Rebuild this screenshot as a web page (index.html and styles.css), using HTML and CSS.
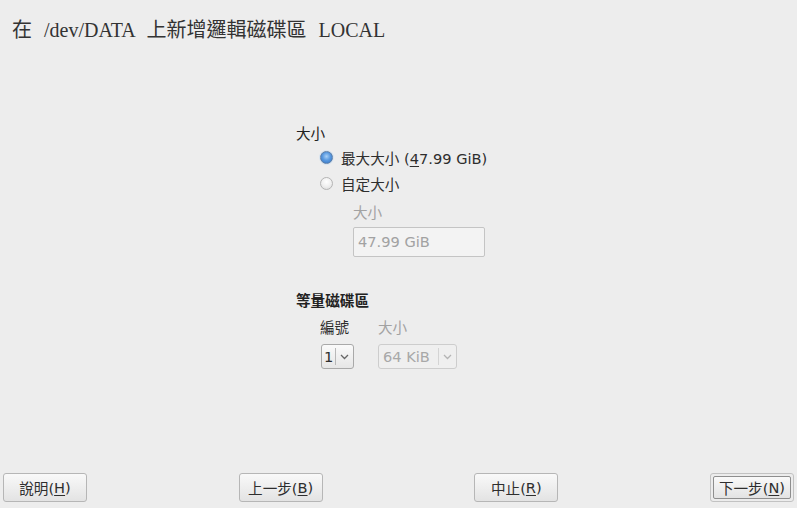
FILE: index.html
```html
<!DOCTYPE html>
<html>
<head>
<meta charset="utf-8">
<link rel="stylesheet" href="styles.css">
</head>
<body>
<div class="page">
  <h1 class="title">在 /dev/DATA 上新增邏輯磁碟區 LOCAL</h1>
  <div class="form">
    <div class="heading">大小</div>
    <label class="radio-row first">
      <span class="radio checked"></span>
      <span>最大大小 (<u>4</u>7.99 GiB)</span>
    </label>
    <label class="radio-row second">
      <span class="radio"></span>
      <span>自定大小</span>
    </label>
    <div class="sub-label disabled">大小</div>
    <div class="input disabled">47.99 GiB</div>

    <div class="heading bold">等量磁碟區</div>
    <div class="stripe">
      <div class="col col-num">
        <div class="col-label">編號</div>
        <div class="combo">
          <span class="combo-value">1</span>
          <span class="combo-sep"></span>
          <svg class="chev" width="9" height="6" viewBox="0 0 9 6"><path d="M1 1 L4.5 4.5 L8 1" fill="none" stroke="#666" stroke-width="1.3"/></svg>
        </div>
      </div>
      <div class="col col-size">
        <div class="col-label disabled">大小</div>
        <div class="combo combo-wide is-disabled">
          <span class="combo-value">64 KiB</span>
          <span class="combo-sep"></span>
          <svg class="chev" width="9" height="6" viewBox="0 0 9 6"><path d="M1 1 L4.5 4.5 L8 1" fill="none" stroke="#b4b4b4" stroke-width="1.3"/></svg>
        </div>
      </div>
    </div>
  </div>
  <div class="buttons">
    <button class="btn">說明(<u>H</u>)</button>
    <button class="btn">上一步(<u>B</u>)</button>
    <button class="btn">中止(<u>R</u>)</button>
    <button class="btn default"><span class="btn-inner">下一步(<u>N</u>)</span></button>
  </div>
</div>
</body>
</html>
```

FILE: styles.css
```css
html, body {
  margin: 0;
  padding: 0;
  background: #ededed;
}
.page {
  width: 797px;
  height: 508px;
  display: flex;
  flex-direction: column;
  font-family: "DejaVu Sans", "Noto Sans CJK TC", sans-serif;
  font-size: 14.6px;
  color: #2e2e2e;
}
.title {
  margin: 0;
  padding: 19px 0 0 12px;
  height: 22px;
  line-height: 22px;
  font-family: "Liberation Serif", "Noto Sans CJK TC", serif;
  font-weight: normal;
  font-size: 20px;
  word-spacing: 7px;
  color: #333;
}
.form {
  width: 205px;
  margin: 84px auto 0;
  display: flex;
  flex-direction: column;
  align-items: flex-start;
}
.heading {
  height: 18px;
  line-height: 18px;
  color: #222;
}
.heading.bold {
  font-weight: bold;
  margin-top: 35px;
}
.radio-row {
  display: flex;
  align-items: center;
  gap: 8px;
  height: 18px;
  line-height: 18px;
  margin-left: 24px;
}
.radio-row.first { margin-top: 7px; }
.radio-row.second { margin-top: 8px; }
.radio-row u { text-decoration-thickness: 1px; text-underline-offset: 2px; }
.radio {
  width: 11px;
  height: 11px;
  border-radius: 50%;
  border: 1px solid #b4b4b4;
  background: radial-gradient(circle at 50% 35%, #ffffff 0%, #f0f0f0 50%, #d8d8d8 100%);
  margin-top: -3px;
}
.radio.checked {
  border-color: #5d7fa8;
  background: radial-gradient(circle at 50% 40%, #a8d0f6 0%, #5a9ae0 45%, #2f6fc0 100%);
  box-shadow: 0 0 0 1px #d8e4f0;
}
.disabled { color: #a2a2a2; }
.sub-label {
  margin: 10px 0 0 57px;
  height: 18px;
  line-height: 18px;
}
.input {
  margin: 5px 0 0 57px;
  box-sizing: border-box;
  width: 132px;
  height: 30px;
  border: 1px solid #c4c4c4;
  border-radius: 2px;
  background: #f3f3f3;
  padding-left: 4px;
  line-height: 28px;
}
.stripe {
  display: flex;
  margin-left: 24px;
  margin-top: 9px;
  gap: 24px;
}
.col { display: flex; flex-direction: column; align-items: flex-start; }
.col-label {
  height: 18px;
  line-height: 18px;
}
.combo {
  margin-top: 7px;
  margin-left: 1px;
  box-sizing: border-box;
  width: 33px;
  height: 25px;
  border: 1px solid #a9a9a9;
  border-radius: 3px;
  background: linear-gradient(#fafafa, #e6e6e6);
  display: flex;
  align-items: center;
  padding-left: 2px;
}
.combo-wide {
  width: 79px;
  margin-left: 0;
  padding-left: 4px;
}
.combo-value { flex: 1; line-height: 23px; }
.combo-sep {
  width: 1px;
  height: 17px;
  background: #b8b8b8;
  margin-right: 4px;
}
.combo .chev { margin-right: 4px; }
.combo.is-disabled {
  border-color: #cdcdcd;
  background: #efefef;
  color: #a8a8a8;
}
.combo.is-disabled .combo-sep { background: #d4d4d4; }
.buttons {
  margin-top: auto;
  display: flex;
  justify-content: space-between;
  padding: 0 3px 6px;
}
.btn {
  box-sizing: border-box;
  width: 84px;
  height: 29px;
  border: 1px solid #b6b6b6;
  border-radius: 3px;
  background: linear-gradient(#f9f9f9, #e3e3e3);
  font-family: "DejaVu Sans", "Noto Sans CJK TC", sans-serif;
  font-size: 14.6px;
  color: #2e2e2e;
  padding: 0;
  display: flex;
  align-items: center;
  justify-content: center;
}
.btn u { text-decoration-thickness: 1px; text-underline-offset: 2px; }
.btn.default {
  border-color: #c2c2c2;
  padding: 2px;
  background: #ececec;
}
.btn-inner {
  box-sizing: border-box;
  width: 100%;
  height: 100%;
  border: 1px solid #8e8e8e;
  border-radius: 2px;
  background: linear-gradient(#f9f9f9, #e3e3e3);
  display: flex;
  align-items: center;
  justify-content: center;
}
```
